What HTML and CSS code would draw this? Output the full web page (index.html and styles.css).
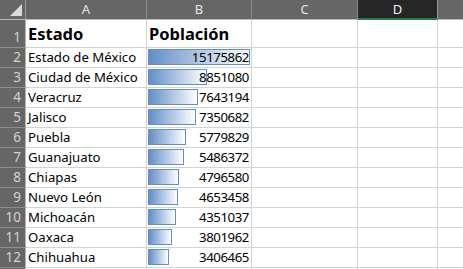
FILE: index.html
```html
<!DOCTYPE html>
<html lang="es">
<head>
<meta charset="utf-8">
<title>Población por estado</title>
<link rel="stylesheet" href="styles.css">
</head>
<body>
<div class="sheet">
  <div class="corner"><span class="tri"></span></div>
  <div class="colhead">A</div>
  <div class="colhead">B</div>
  <div class="colhead">C</div>
  <div class="colhead sel">D</div>
  <div class="colhead last"></div>

  <div class="rowhead tall">1</div>
  <div class="cell tall head">Estado</div>
  <div class="cell tall head">Población</div>
  <div class="cell tall"></div>
  <div class="cell tall"></div>
  <div class="cell tall last"></div>

  <div class="rowhead">2</div>
  <div class="cell">Estado de México</div>
  <div class="cell num"><span class="bar" style="width:102px"></span><span class="val">15175862</span></div>
  <div class="cell"></div><div class="cell"></div><div class="cell last"></div>

  <div class="rowhead">3</div>
  <div class="cell">Ciudad de México</div>
  <div class="cell num"><span class="bar" style="width:58.6px"></span><span class="val">8851080</span></div>
  <div class="cell"></div><div class="cell"></div><div class="cell last"></div>

  <div class="rowhead">4</div>
  <div class="cell">Veracruz</div>
  <div class="cell num"><span class="bar" style="width:50px"></span><span class="val">7643194</span></div>
  <div class="cell"></div><div class="cell"></div><div class="cell last"></div>

  <div class="rowhead">5</div>
  <div class="cell">Jalisco</div>
  <div class="cell num"><span class="bar" style="width:48.3px"></span><span class="val">7350682</span></div>
  <div class="cell"></div><div class="cell"></div><div class="cell last"></div>

  <div class="rowhead">6</div>
  <div class="cell">Puebla</div>
  <div class="cell num"><span class="bar" style="width:37.6px"></span><span class="val">5779829</span></div>
  <div class="cell"></div><div class="cell"></div><div class="cell last"></div>

  <div class="rowhead">7</div>
  <div class="cell">Guanajuato</div>
  <div class="cell num"><span class="bar" style="width:35.6px"></span><span class="val">5486372</span></div>
  <div class="cell"></div><div class="cell"></div><div class="cell last"></div>

  <div class="rowhead">8</div>
  <div class="cell">Chiapas</div>
  <div class="cell num"><span class="bar" style="width:30.8px"></span><span class="val">4796580</span></div>
  <div class="cell"></div><div class="cell"></div><div class="cell last"></div>

  <div class="rowhead">9</div>
  <div class="cell">Nuevo León</div>
  <div class="cell num"><span class="bar" style="width:29.8px"></span><span class="val">4653458</span></div>
  <div class="cell"></div><div class="cell"></div><div class="cell last"></div>

  <div class="rowhead">10</div>
  <div class="cell">Michoacán</div>
  <div class="cell num"><span class="bar" style="width:27.8px"></span><span class="val">4351037</span></div>
  <div class="cell"></div><div class="cell"></div><div class="cell last"></div>

  <div class="rowhead">11</div>
  <div class="cell">Oaxaca</div>
  <div class="cell num"><span class="bar" style="width:24px"></span><span class="val">3801962</span></div>
  <div class="cell"></div><div class="cell"></div><div class="cell last"></div>

  <div class="rowhead">12</div>
  <div class="cell">Chihuahua</div>
  <div class="cell num"><span class="bar" style="width:21.3px"></span><span class="val">3406465</span></div>
  <div class="cell"></div><div class="cell"></div><div class="cell last"></div>

  <div class="rowhead stub"></div>
  <div class="cell stub"></div><div class="cell stub"></div><div class="cell stub"></div><div class="cell stub"></div><div class="cell stub last"></div>
</div>
</body>
</html>
```

FILE: styles.css
```css
* { box-sizing: border-box; }
html, body { margin: 0; padding: 0; background: #ffffff; overflow: hidden; }
body { width: 463px; height: 269px; font-family: "Noto Sans", "Liberation Sans", sans-serif; }

.sheet {
  display: grid;
  grid-template-columns: 26px 121px 105px 106px 80px 1fr;
  grid-template-rows: 20px 28px repeat(11, 20px) 1px;
}

.corner {
  background: #666666;
  border-right: 1px solid #9a9a9a;
  border-bottom: 1px solid #bdbdbd;
  display: flex;
  align-items: flex-end;
  justify-content: flex-end;
  padding: 0 3px 3px 0;
}
.tri {
  width: 0; height: 0;
  border-left: 12px solid transparent;
  border-bottom: 12px solid #dcdcdc;
}

.colhead {
  background: #666666;
  color: #e4e4e4;
  font-size: 13px;
  display: flex;
  align-items: center;
  justify-content: center;
  border-right: 1px solid #8c8c8c;
  border-bottom: 1px solid #bdbdbd;
  padding-bottom: 1px;
}
.colhead.sel {
  background: #262626;
  color: #f2f2f2;
  border-bottom: 2px solid #2d7a52;
  border-right-color: #9a9a9a;
}
.colhead.last { border-right: none; }

.rowhead {
  background: #666666;
  color: #d2d2d2;
  font-size: 13.5px;
  display: flex;
  align-items: flex-end;
  justify-content: flex-end;
  padding: 0 4px 0 0;
  line-height: 19px;
  border-right: 1px solid #b4b4b4;
  border-bottom: 1px solid #8e8e8e;
}

.cell {
  border-right: 1px solid #d4d4d4;
  border-bottom: 1px solid #d4d4d4;
  font-size: 13.2px;
  color: #000000;
  padding: 0 2px 0 2px;
  display: flex;
  align-items: flex-end;
  line-height: 19px;
  white-space: nowrap;
}
.cell.last { border-right: none; }
.cell.head {
  font-weight: 700;
  font-size: 16.5px;
  line-height: 26px;
}
.stub { border-bottom: none; }

.cell.num {
  display: grid;
  padding: 0;
}
.bar {
  grid-area: 1 / 1;
  align-self: start;
  justify-self: start;
  margin: 1px 0 0 1px;
  height: 16px;
  border: 1px solid #638ec6;
  background: linear-gradient(to right, #638ec6, #ffffff);
}
.val {
  grid-area: 1 / 1;
  justify-self: end;
  align-self: end;
  padding-right: 2px;
  letter-spacing: -0.4px;
  line-height: 19px;
}
```
